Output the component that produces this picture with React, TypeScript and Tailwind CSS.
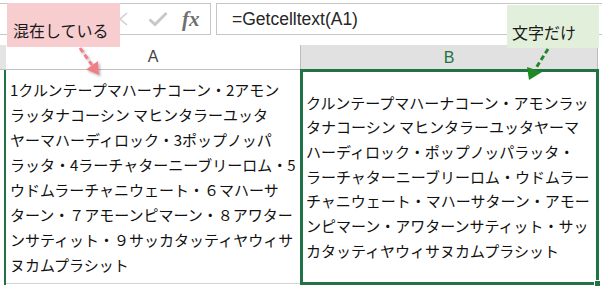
const JP = "font-['Noto_Sans_CJK_JP',sans-serif]";

const linesA = [
  "1クルンテープマハーナコーン・2アモン",
  "ラッタナコーシン マヒンタラーユッタ",
  "ヤーマハーディロック・3ポップノッパ",
  "ラッタ・4ラーチャターニーブリーロム・5",
  "ウドムラーチャニウェート・６マハーサ",
  "ターン・７アモーンピマーン・８アワター",
  "ンサティット・９サッカタッティヤウィサ",
  "ヌカムプラシット",
];

const linesB = [
  "クルンテープマハーナコーン・アモンラッ",
  "タナコーシン マヒンタラーユッタヤーマ",
  "ハーディロック・ポップノッパラッタ・",
  "ラーチャターニーブリーロム・ウドムラー",
  "チャニウェート・マハーサターン・アモー",
  "ンピマーン・アワターンサティット・サッ",
  "カタッティヤウィサヌカムプラシット",
];

function FormulaBar() {
  return (
    <div className="flex h-[35px] gap-[5px] pt-[3px]">
      <div className="flex w-[211px] items-center border-y border-r border-[#c6c6c6] pl-[111px]">
        <svg width="18" height="16" viewBox="0 0 18 16">
          <path d="M2 2 L16 14 M16 2 L2 14" stroke="#cfcfcf" strokeWidth="1.6" fill="none" />
        </svg>
        <svg className="ml-[19px]" width="20" height="16" viewBox="0 0 20 16">
          <path d="M1.5 8.5 L7 13.5 L18.5 2" stroke="#c8c8c8" strokeWidth="3" fill="none" />
        </svg>
        <span className="ml-[14px] font-['Liberation_Serif',serif] text-[21px] font-semibold italic leading-none text-[#6f6f6f]">
          fx
        </span>
      </div>
      <div className="flex flex-1 items-center border-y border-l border-[#c6c6c6] pl-[15px] font-['Liberation_Sans',sans-serif] text-[17.5px] text-[#262626]">
        =Getcelltext(A1)
      </div>
    </div>
  );
}

function HeaderRow() {
  return (
    <div className="mt-[10px] flex h-[25px] font-['Liberation_Sans',sans-serif] text-[16px]">
      <div className="w-[6px] border-b border-[#c0c0c0] bg-[#e4e4e4]" />
      <div className="flex w-[294px] items-center justify-center border-b border-[#c0c0c0] text-[#444]">
        A
      </div>
      <div className="flex w-[298px] items-center justify-center border-x border-[#bdbdbd] bg-[#e1e1e1] text-[#217346]">
        B
      </div>
    </div>
  );
}

function CellRow() {
  return (
    <div className={`flex ${JP} text-[15px] text-[#111]`}>
      <div className="h-[215px] w-[6px] border-r-2 border-[#217346]" />
      <div className="flex h-[214px] w-[294px] flex-col justify-center border-b border-[#d4d4d4] pl-[4px] leading-[25px]">
        {linesA.map((l) => (
          <div key={l} className="whitespace-pre">
            {l}
          </div>
        ))}
      </div>
      <div className="relative -mt-px flex h-[216px] w-[299px] flex-col justify-center border-[3px] border-[#217346] pl-[3px] leading-[24.7px]">
        {linesB.map((l) => (
          <div key={l} className="whitespace-pre">
            {l}
          </div>
        ))}
        <div className="absolute -right-[5px] -bottom-[5px] h-[7px] w-[7px] border border-white bg-[#217346]" />
      </div>
    </div>
  );
}

function Arrows() {
  return (
    <svg className="pointer-events-none absolute inset-0" width="602" height="288">
      <defs>
        <filter id="sh" x="-50%" y="-50%" width="200%" height="200%">
          <feDropShadow dx="1.5" dy="1.5" stdDeviation="1" floodColor="#000" floodOpacity="0.3" />
        </filter>
      </defs>
      <g filter="url(#sh)">
        <path d="M80 48 L92 65" stroke="#ee7f86" strokeWidth="3" strokeDasharray="5 3" fill="none" />
        <polygon points="99,75 86,69.5 98,61" fill="#ee7f86" />
      </g>
      <path d="M548 49 L536 68" stroke="#1f8a24" strokeWidth="3" strokeDasharray="5 3" fill="none" />
      <polygon points="529,80 527,67 542,72" fill="#1f8a24" />
    </svg>
  );
}

export default function App() {
  return (
    <div className="relative h-[288px] w-[602px] overflow-hidden bg-white">
      <FormulaBar />
      <HeaderRow />
      <CellRow />

      <div className={`absolute top-[3px] left-[7px] h-[44px] w-[113px] bg-[#f7cdd0] pt-[15px] pl-[6px] ${JP} text-[16px] leading-[24px] text-[#1a1a1a]`}>
        混在している
      </div>
      <div className={`absolute top-[5px] left-[507px] h-[43px] w-[92px] bg-[#e2efda] pt-[15px] pl-[5px] ${JP} text-[16px] leading-[24px] text-[#1a1a1a]`}>
        文字だけ
      </div>
      <Arrows />
    </div>
  );
}
